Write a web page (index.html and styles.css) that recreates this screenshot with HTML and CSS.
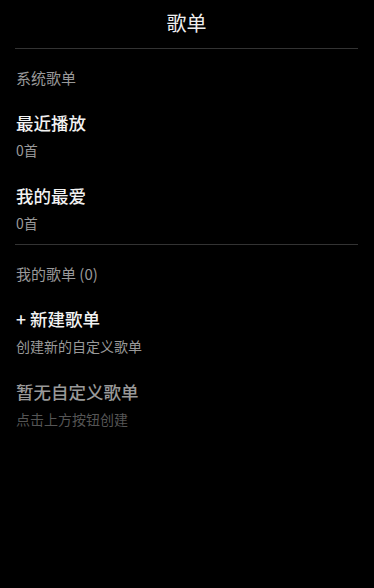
FILE: index.html
```html
<!DOCTYPE html>
<html>
<head>
    <title>歌单</title>
    <link rel="stylesheet" href="styles.css">
</head>
<body>
    <div class="page">
        <div class="header">歌单</div>

        <div class="section">
            <div class="section-title">系统歌单</div>
            <div class="item">
                <div class="item-name">最近播放</div>
                <div class="item-count">0首</div>
            </div>
            <div class="item">
                <div class="item-name">我的最爱</div>
                <div class="item-count">0首</div>
            </div>
        </div>

        <div class="section">
            <div class="section-title">我的歌单 (0)</div>
            <div class="item">
                <div class="item-name">+ 新建歌单</div>
                <div class="item-count">创建新的自定义歌单</div>
            </div>
            <div class="item empty">
                <div class="item-name">暂无自定义歌单</div>
                <div class="item-count">点击上方按钮创建</div>
            </div>
        </div>
    </div>
</body>
</html>
```

FILE: styles.css
```css
body {
    margin: 0;
    background-color: #000;
    color: #fff;
    font-family: "Noto Sans CJK SC", "Noto Sans", sans-serif;
}

.page {
    padding: 0 16px 0 15px;
    min-height: 588px;
}

.header {
    height: 48px;
    line-height: 46px;
    text-align: center;
    font-size: 20px;
    color: #eee;
    border-bottom: 1px solid #333;
}

.section {
    padding: 12px 0 3px 1px;
}

.section + .section {
    border-top: 1px solid #333;
}

.section-title {
    font-size: 15px;
    line-height: 34px;
    color: #999;
}

.item {
    padding: 14px 0 7px;
}

.item-name {
    font-size: 17.5px;
    line-height: 28px;
    margin-bottom: 2px;
    font-weight: 500;
    color: #f2f2f2;
}

.item-count {
    font-size: 14px;
    line-height: 22px;
    color: #999;
}

.empty .item-name {
    color: #999;
}

.empty .item-count {
    color: #555;
}
```
